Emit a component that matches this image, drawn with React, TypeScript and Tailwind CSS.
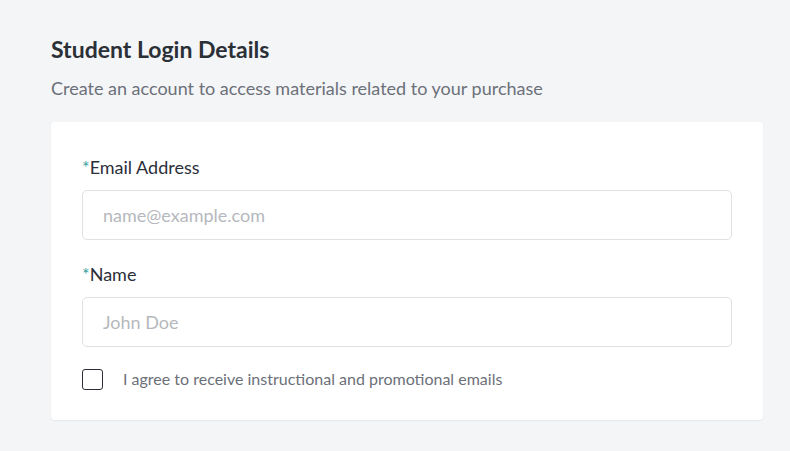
export default function App() {
  return (
    <div className="min-h-[451px] bg-[#f4f5f7] px-[51px] pt-[33px] pb-[31px] font-['Lato',sans-serif]">
      <h2 className="text-[23px] font-bold leading-[32px] text-[#2b3036]">Student Login Details</h2>
      <p className="mt-[12px] text-[18px] leading-[22px] text-[#6c7079]">
        Create an account to access materials related to your purchase
      </p>
      <div className="mt-[23px] w-[712px] rounded-[4px] bg-white px-[31px] pt-[34px] pb-[29px] shadow-[0_1px_2px_rgba(0,0,0,0.06)]">
        <label className="block text-[18px] leading-[22px] text-[#2c2f3a]">
          <span className="text-[#3a9fa0]">*</span>Email Address
        </label>
        <input
          type="email"
          placeholder="name@example.com"
          className="mt-[12px] h-[50px] w-full rounded-[5px] border border-[#dfe1e4] px-[20px] text-[18px] text-[#2c2f3a] outline-none placeholder:text-[#b5b8bd]"
        />
        <label className="mt-[23px] block text-[18px] leading-[22px] text-[#2c2f3a]">
          <span className="text-[#3a9fa0]">*</span>Name
        </label>
        <input
          type="text"
          placeholder="John Doe"
          className="mt-[12px] h-[50px] w-full rounded-[5px] border border-[#dfe1e4] px-[20px] text-[18px] text-[#2c2f3a] outline-none placeholder:text-[#b5b8bd]"
        />
        <label className="mt-[20px] flex items-center gap-[20px]">
          <span className="h-[21px] w-[21px] rounded-[3px] border-[1.5px] border-[#2c2f3a]" />
          <span className="text-[16px] text-[#6c7079]">I agree to receive instructional and promotional emails</span>
        </label>
      </div>
    </div>
  );
}
